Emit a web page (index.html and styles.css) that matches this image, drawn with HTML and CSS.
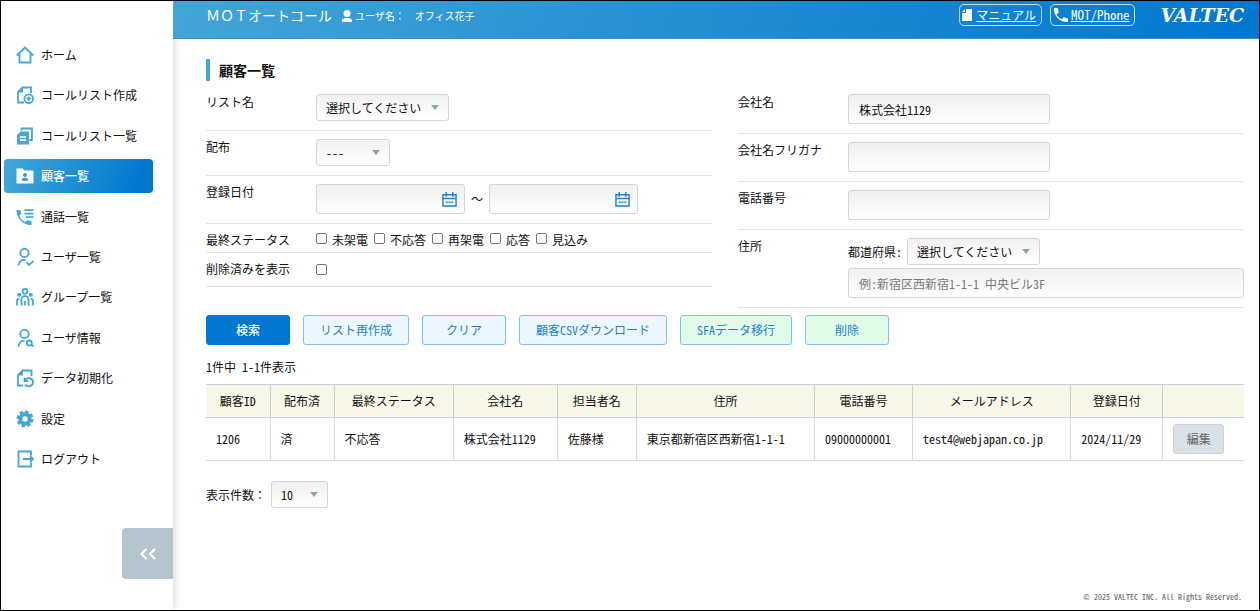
FILE: index.html
```html
<!DOCTYPE html>
<html lang="ja">
<head>
<meta charset="utf-8">
<meta name="viewport" content="width=device-width, initial-scale=1">
<title>MOTオートコール | 顧客一覧</title>
<link rel="stylesheet" href="styles.css">
</head>
<body>
<div class="app">
  <aside class="sidebar">
    <nav>
      <ul class="menu">
        <li><a class="menu-link" href="#"><svg class="icon" viewBox="0 0 18 18"><path d="M.8 9.500 9 1.500l8.200 8M3.500 8v8.500h11V8"/></svg>ホーム</a></li>
        <li><a class="menu-link" href="#"><svg class="icon" viewBox="0 0 18 18"><path d="M15 7V1.500H6.500L2 6v10.500h6"/><path class="solid" d="M1.500 6.500 7 1v5.500z"/><circle cx="12.700" cy="12.700" r="4.300"/><path d="M12.700 10.400V15M10.400 12.700H15"/></svg>コールリスト作成</a></li>
        <li><a class="menu-link" href="#"><svg class="icon" viewBox="0 0 18 18"><path d="M5.500 3.500V1.500H16V13h-2.500"/><path class="solid" d="M4.500 4.500H13v13H1V8z"/><path class="cut" d="M4 10.200h6M4 13.200h6"/></svg>コールリスト一覧</a></li>
        <li><a class="menu-link is-active" href="#" aria-current="page"><svg class="icon" viewBox="0 0 18 18"><path class="solid" d="M.5 1.500h6l2 2h9v13H.5z"/><circle class="hole" cx="9" cy="8" r="2"/><path class="hole" d="M5.500 13.800c0-4 7-4 7 0z"/></svg>顧客一覧</a></li>
        <li><a class="menu-link" href="#"><svg class="icon" viewBox="0 0 18 18"><path class="solid" d="M.5 2h3.800l1 4-2 1.700c1 3 3 5 6 6.300l2-2 4.200 1.200v3.900C7 17.500.5 10 .5 2z"/><path d="M8.500 2.200h9M8.500 5.700h9M10 9.200h7.500"/></svg>通話一覧</a></li>
        <li><a class="menu-link" href="#"><svg class="icon" viewBox="0 0 18 18"><circle cx="8.500" cy="5" r="4.200"/><path d="M2.500 17.500c.5-4 3-6 7-5.500M10.500 14.500l2.500 2.500 4.500-4"/></svg>ユーザ一覧</a></li>
        <li><a class="menu-link" href="#"><svg class="icon" viewBox="0 0 18 18"><circle cx="9" cy="3.300" r="2.500"/><circle class="solid" cx="3.200" cy="6.800" r="2"/><circle class="solid" cx="14.800" cy="6.800" r="2"/><path d="M5.500 17.500v-6c0-4.500 7-4.500 7 0v6M9 13v4.500M1 17.500v-4c0-1.500 1-2.800 2.500-2.800M17 17.500v-4c0-1.500-1-2.800-2.500-2.800"/></svg>グループ一覧</a></li>
        <li><a class="menu-link" href="#"><svg class="icon" viewBox="0 0 18 18"><circle cx="8.500" cy="5" r="4.200"/><path d="M2.500 17.500c.5-4 2.500-6 6-5.500M15 15.500l2.500 2"/><circle cx="13.300" cy="14" r="2.500"/></svg>ユーザ情報</a></li>
        <li><a class="menu-link" href="#"><svg class="icon" viewBox="0 0 18 18"><path d="M15.500 7V1.500H6.500L2 6v10.500h5"/><path class="solid" d="M1.500 6.500 7 1v5.500z"/><path d="M8.500 8.500V12H12M9 11.500c2-4 8-2.500 8 1.500 0 5-6 5.500-8 2.500"/></svg>データ初期化</a></li>
        <li><a class="menu-link" href="#"><svg class="icon" viewBox="0 0 18 18"><circle class="teeth" cx="9" cy="9" r="7"/><circle class="ring" cx="9" cy="9" r="4.700"/></svg>設定</a></li>
        <li><a class="menu-link" href="#"><svg class="icon" viewBox="0 0 18 18"><path d="M15 5.500v-4H2.500v15H15v-4M7 9h10M14 6l3 3-3 3"/></svg>ログアウト</a></li>
      </ul>
    </nav>
    <button class="collapse" type="button" aria-label="メニューを閉じる"><svg viewBox="0 0 18 12"><path d="M7.500 1l-5 5 5 5M16 1l-5 5 5 5"/></svg></button>
  </aside>

  <div class="page">
    <header class="topbar">
      <span class="app-name full">ＭＯＴオートコール</span>
      <span class="user full"><svg class="user-icon" viewBox="0 0 10 12"><circle cx="5" cy="3.500" r="3.500"/><path d="M0 12V9.500L3 8h4l3 1.500V12z"/></svg><span>ユーザ名：</span><span>オフィス花子</span></span>
      <a class="pill" href="#"><svg class="doc-icon" viewBox="0 0 10 12"><path d="M4 0h6v12H0V4h4z"/><path d="M0 3l3-3v3z"/></svg><span>マニュアル</span></a>
      <a class="pill pill-phone" href="#"><svg class="phone-icon" viewBox="0 0 16 16"><path d="M1 1h3.600l1.200 4.300-2.100 1.900c1 2.500 2.700 4.100 5 5l2-1.900 4.300 1.200V15C7 15.500.5 9 1 1z"/></svg><span>MOT/Phone</span></a>
      <span class="logo">VALTEC</span>
    </header>

    <main class="content">
      <h1 class="title">顧客一覧</h1>
      <form class="search">
        <div class="columns">
          <div class="column">
            <div class="field">
              <label for="list">リスト名</label>
              <div><select id="list" class="control select select-long"><option>選択してください</option></select></div>
            </div>
            <div class="field">
              <label for="dist">配布</label>
              <div><select id="dist" class="control select select-mid"><option>---</option></select></div>
            </div>
            <div class="field">
              <label for="from">登録日付</label>
              <div class="range">
                <span class="control date"><input id="from" type="text"><button type="button" aria-label="開始日を選択"><svg viewBox="0 0 16 16"><path d="M1 3h14v12H1zM1 7h14M4.500 0v5M11.500 0v5"/><path class="dots" d="M4 11h8"/></svg></button></span>
                <span class="full">～</span>
                <span class="control date"><input type="text" aria-label="登録日付（終了）"><button type="button" aria-label="終了日を選択"><svg viewBox="0 0 16 16"><path d="M1 3h14v12H1zM1 7h14M4.500 0v5M11.500 0v5"/><path class="dots" d="M4 11h8"/></svg></button></span>
              </div>
            </div>
            <div class="field field-tight">
              <span>最終ステータス</span>
              <div class="checks">
                <label><input type="checkbox">未架電</label>
                <label><input type="checkbox">不応答</label>
                <label><input type="checkbox">再架電</label>
                <label><input type="checkbox">応答</label>
                <label><input type="checkbox">見込み</label>
              </div>
            </div>
            <div class="field">
              <label for="deleted">削除済みを表示</label>
              <div class="checks"><input id="deleted" type="checkbox"></div>
            </div>
          </div>

          <div class="column">
            <div class="field">
              <label for="company">会社名</label>
              <div><input id="company" class="control text" type="text" value="株式会社1129"></div>
            </div>
            <div class="field">
              <label for="kana">会社名フリガナ</label>
              <div><input id="kana" class="control text" type="text"></div>
            </div>
            <div class="field">
              <label for="tel">電話番号</label>
              <div><input id="tel" class="control text" type="text"></div>
            </div>
            <div class="field">
              <label for="address">住所</label>
              <div class="address">
                <div class="pref"><label for="pref">都道府県:</label><select id="pref" class="control select select-long"><option>選択してください</option></select></div>
                <input id="address" class="control text text-wide" type="text" placeholder="例：新宿区西新宿1-1-1 中央ビル3F">
              </div>
            </div>
          </div>
        </div>

        <div class="actions">
          <button class="btn btn-primary" type="button">検索</button>
          <button class="btn" type="button">リスト再作成</button>
          <button class="btn" type="button">クリア</button>
          <button class="btn" type="button">顧客CSVダウンロード</button>
          <button class="btn btn-green" type="button">SFAデータ移行</button>
          <button class="btn btn-green" type="button">削除</button>
        </div>
      </form>

      <p class="count">1件中 1-1件表示</p>

      <table class="list">
        <colgroup>
          <col class="w-id"><col class="w-id"><col class="w-status"><col class="w-company"><col class="w-person"><col class="w-address"><col class="w-tel"><col class="w-mail"><col class="w-date"><col class="w-edit">
        </colgroup>
        <thead>
          <tr><th>顧客ID</th><th>配布済</th><th>最終ステータス</th><th>会社名</th><th>担当者名</th><th>住所</th><th>電話番号</th><th>メールアドレス</th><th>登録日付</th><th></th></tr>
        </thead>
        <tbody>
          <tr><td>1206</td><td>済</td><td>不応答</td><td>株式会社1129</td><td>佐藤様</td><td>東京都新宿区西新宿1-1-1</td><td>09000000001</td><td>test4@webjapan.co.jp</td><td>2024/11/29</td><td><button class="btn-edit" type="button">編集</button></td></tr>
        </tbody>
      </table>

      <div class="per-page"><label class="full" for="per">表示件数：</label><select id="per" class="control select select-short"><option>10</option></select></div>
    </main>
    <footer class="footer">© 2025 VALTEC INC. All Rights Reserved.</footer>
  </div>
</div>
</body>
</html>
```
FILE: styles.css
```css
* { box-sizing: border-box; }

body {
  margin: 0;
  color: #111;
  font-family: "Noto Sans CJK JP", sans-serif;
  font-feature-settings: "hwid";
  font-size: 12px;
  line-height: 16px;
}

button, input, select { font: inherit; font-feature-settings: inherit; color: inherit; margin: 0; }

.full { font-feature-settings: normal; }

.app {
  display: flex;
  min-height: 100vh;
  border: 1px solid #000;
}

/* Sidebar */
.sidebar {
  display: flex;
  flex-direction: column;
  flex: none;
  width: 172px;
  padding: 37px 0 31px;
  background: #fff;
  box-shadow: 0 0 10px rgba(0, 0, 0, .2);
}

.menu {
  display: flex;
  flex-direction: column;
  justify-content: space-between;
  min-height: 438px;
  margin: 0;
  padding: 0 20px 0 3px;
  list-style: none;
}

.menu-link {
  display: flex;
  align-items: center;
  gap: 7px;
  height: 34px;
  padding-left: 12px;
  border-radius: 4px;
  color: #111;
  text-decoration: none;
  white-space: nowrap;
}

.menu-link.is-active {
  background: linear-gradient(110deg, #43a8d8, #0077d0 90%);
  color: #fff;
  font-weight: 500;
}

.icon { width: 18px; height: 18px; fill: none; stroke: #43a8d8; stroke-width: 1.800; }
.icon .solid { fill: #43a8d8; stroke: none; }
.icon .cut { stroke: #fff; }
.is-active .icon .solid { fill: #fff; }
.icon .hole { fill: #3498d4; stroke: none; }
.icon .teeth { stroke-width: 3; stroke-dasharray: 3.200 2.300; }
.icon .ring { stroke-width: 4; }

.collapse {
  display: grid;
  place-items: center;
  width: 51px;
  height: 51px;
  margin: auto 0 0 auto;
  padding: 0;
  border: 0;
  border-radius: 4px 0 0 4px;
  background: #b6c4cd;
}
.collapse svg { width: 18px; height: 12px; fill: none; stroke: #fff; stroke-width: 2; }

/* Header */
.page { display: flex; flex-direction: column; flex: 1; min-width: 0; }

.topbar {
  position: relative;
  display: flex;
  align-items: flex-start;
  height: 38px;
  padding: 3px 15px 0 33px;
  border-bottom: 1px solid #3a8fc8;
  background: linear-gradient(110deg, #43a5d6, #0077d0);
  color: #fff;
  line-height: 22px;
}

.app-name { font-size: 14px; }
.user { display: flex; align-items: center; gap: 10px; margin: 1px auto 0 10px; font-size: 10px; }
.user-icon { width: 10px; height: 12px; margin-right: -7px; fill: #fff; }

.pill {
  display: flex;
  align-items: center;
  gap: 4px;
  height: 22px;
  margin-right: 8px;
  padding: 0 5px 0 2px;
  border: 1px solid rgba(255, 255, 255, .75);
  border-radius: 5px;
  color: #fff;
}
.pill-phone { gap: 2px; margin-right: 25px; font-size: 13px; }
.doc-icon { width: 10px; height: 12px; fill: #fff; }
.phone-icon { width: 16px; height: 16px; fill: #fff; }

.logo { font: italic bold 19px/22px "DejaVu Serif", serif; }

/* Content */
.content { flex: 1; padding: 20px 15px 0 33px; }

.title {
  margin: 0 0 5px;
  padding-left: 9px;
  border-left: 4px solid #43a8d8;
  font-size: 14px;
  line-height: 22px;
}

.columns { display: grid; grid-template-columns: 1fr 1fr; align-items: start; gap: 26px; }

.field {
  display: grid;
  grid-template-columns: 110px minmax(0, 1fr);
  padding: 8px 0 9px;
  border-bottom: 1px solid #dfe7ea;
}
.field-tight { padding-bottom: 4px; }
.field > div { display: flex; }

.control {
  border: 1px solid #ccd7df;
  border-radius: 3px;
  background: linear-gradient(#f1f1f1, #fff);
}

.select {
  appearance: none;
  height: 27px;
  padding: 0 9px;
  background: url("data:image/svg+xml,%3Csvg xmlns='http://www.w3.org/2000/svg' width='8' height='5'%3E%3Cpath d='M0 0h8L4 5z' fill='%238aa4b3'/%3E%3C/svg%3E") no-repeat right 9px center, linear-gradient(#f1f1f1, #fff);
}
.select-long { width: 133px; }
.select-mid { width: 74px; }
.select-short { width: 57px; }

.text { width: 202px; height: 30px; padding: 0 10px; }
.field .text-wide { width: 100%; }
.text::placeholder { color: #777; opacity: 1; }

.range { align-items: center; justify-content: flex-start; gap: 6px; }
.date { display: flex; align-items: center; width: 149px; height: 30px; padding: 0 7px; }
.date input { flex: 1; min-width: 0; border: 0; background: none; }
.date button { display: flex; padding: 0; border: 0; background: none; }
.date svg { width: 15px; height: 15px; fill: none; stroke: #1b80d0; stroke-width: 1.500; }
.date .dots { stroke-dasharray: 2 1; }

.checks { gap: 6px; }
.checks label { display: flex; gap: 5px; white-space: nowrap; }
.checks input {
  appearance: none;
  width: 11px;
  height: 11px;
  margin-top: 1px;
  border: 1px solid #777;
  border-radius: 2px;
  background: #fff;
}
.checks input:checked { background: #0077d0; }
.checks > input { margin-top: 3px; }

.field > .address { flex-direction: column; gap: 3px; }
.pref { display: flex; align-items: center; gap: 5px; }

.actions { display: flex; flex-wrap: wrap; gap: 13px; padding-top: 7px; }

.btn {
  min-width: 84px;
  height: 30px;
  padding: 0 16px;
  border: 1px solid #7cc3e2;
  border-radius: 3px;
  background: #ecf7ff;
  color: #1b80d0;
}
.btn-primary { border-color: #0077d0; background: #0077d0; color: #fff; font-weight: 500; }
.btn-green { background: #e3fcea; }

.count { margin: 14px 0 9px; }

.list { width: 100%; border-collapse: collapse; table-layout: fixed; }
.list th {
  height: 33px;
  padding: 0;
  border: 1px solid #c7d1d6;
  background: #f8f8ea;
  font-weight: 400;
}
.list td {
  height: 43px;
  padding: 0 0 0 10px;
  border: 1px solid #d5dde2;
  white-space: nowrap;
}
.list th:first-child, .list td:first-child { border-left: 0; }
.list th:last-child, .list td:last-child { border-right: 0; }

.w-id { width: 64px; }
.w-status { width: 119px; }
.w-company { width: 104px; }
.w-person { width: 79px; }
.w-address { width: 178px; }
.w-tel { width: 98px; }
.w-mail { width: 158px; }
.w-date { width: 92px; }
.w-edit { width: 81px; }

.btn-edit {
  width: 51px;
  height: 30px;
  padding: 0;
  border: 1px solid #c7d2da;
  border-radius: 3px;
  background: #d9e0e6;
  color: #666;
}

.per-page { display: flex; align-items: center; gap: 5px; padding-top: 20px; }

.footer { padding: 0 17px 5px 0; color: #555; font-size: 8px; text-align: right; }
```
